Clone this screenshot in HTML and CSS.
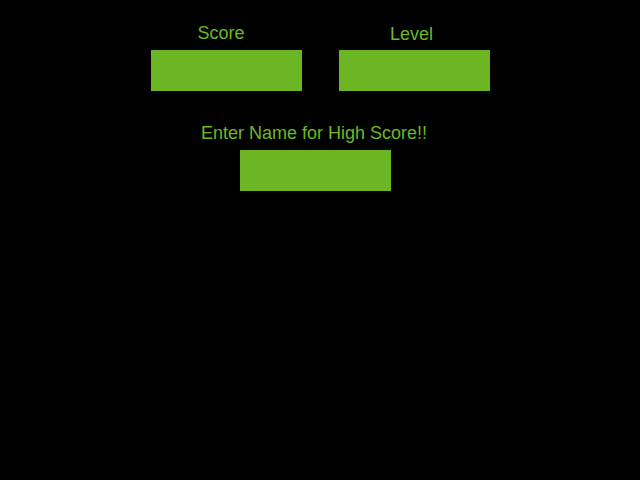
FILE: index.html
```html
<!DOCTYPE html>
<html>
<head>
<meta charset="utf-8">
<link rel="stylesheet" href="styles.css">
</head>
<body>
<div class="screen">
  <div class="stats">
    <div class="stat stat-score">
      <div class="label">Score</div>
      <div class="field"></div>
    </div>
    <div class="stat stat-level">
      <div class="label">Level</div>
      <div class="field"></div>
    </div>
  </div>
  <div class="name-entry">
    <div class="name-label">Enter Name for High Score!!</div>
    <div class="field name-field"></div>
  </div>
</div>
</body>
</html>
```
FILE: styles.css
```css
html, body {
  margin: 0;
  padding: 0;
  background: #000;
  width: 640px;
  height: 480px;
  overflow: hidden;
}
.screen {
  font-family: "Liberation Sans", Arial, sans-serif;
  font-size: 18px;
  line-height: 21px;
  color: #6cb823;
  padding-top: 23px;
}
.stats {
  display: flex;
  gap: 37px;
  margin-left: 151px;
}
.stat {
  display: flex;
  flex-direction: column;
  width: 151px;
}
.label {
  text-align: center;
  height: 21px;
  margin-bottom: 6px;
}
.stat-score .label {
  padding-right: 11px;
}
.stat-level .label {
  padding-right: 6px;
  position: relative;
  top: 1px;
}
.field {
  width: 151px;
  height: 41px;
  background: #6bb622;
}
.name-entry {
  margin-top: 32px;
  display: flex;
  flex-direction: column;
}
.name-label {
  margin-left: 201px;
  height: 21px;
  margin-bottom: 6px;
}
.name-field {
  margin-left: 240px;
}
```
